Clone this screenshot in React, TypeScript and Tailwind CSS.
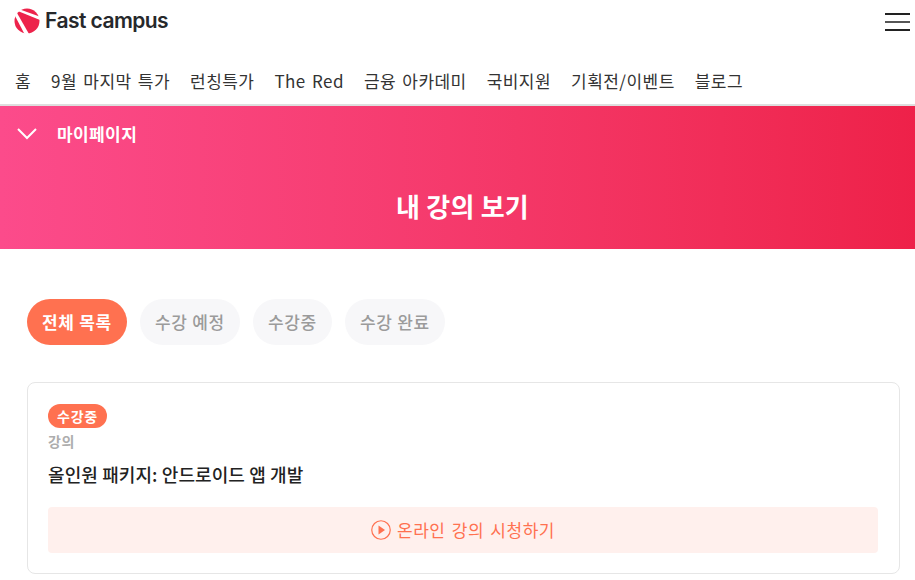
const kr = "font-['Noto_Sans_CJK_KR','Noto_Sans',sans-serif]";

const navItems = ["홈", "9월 마지막 특가", "런칭특가", "The Red", "금융 아카데미", "국비지원", "기획전/이벤트", "블로그"];
const tabs = ["수강 예정", "수강중", "수강 완료"];

const Logo = () => (
    <svg width="26" height="26" viewBox="0 0 26 26">
        <circle cx="13" cy="13" r="12.5" fill="#ed234b" />
        <path d="M2.5 2.5 L6 1.5 L25.5 8.5 L26 12 Z" fill="#fff" />
        <path d="M0 6 L3 5 L15 26 L10.5 26 Z" fill="#fff" />
    </svg>
);

const App = () => {
    return (
        <div className={`w-[915px] h-[580px] overflow-hidden bg-white ${kr}`}>
            <header className="h-[104px] flex flex-col">
                <div className="flex justify-between items-start pl-[14px] pr-[5px] pt-[8px] h-[62px]">
                    <div className="flex items-center gap-[5px]">
                        <Logo />
                        <span className="font-['Inter',sans-serif] text-[21px] leading-[26px] font-semibold tracking-[-0.55px] text-[#26282b]">Fast campus</span>
                    </div>
                    <button className="w-[25px] flex flex-col gap-[6px] mt-[5px]">
                        <span className="h-[2px] bg-[#222]"></span>
                        <span className="h-[2px] bg-[#555]"></span>
                        <span className="h-[2px] bg-[#222]"></span>
                    </button>
                </div>
                <nav className="flex gap-[20px] pl-[15px] text-[17px] leading-[38px] tracking-[0.45px] [word-spacing:2px] text-[#333]">
                    {navItems.map((item) => (
                        <span key={item}>{item}</span>
                    ))}
                </nav>
            </header>
            <div className="h-[2px] bg-[#dedede]"></div>
            <section className="h-[143px] bg-gradient-to-r from-[#fc4b8b] to-[#ee2149] text-white">
                <div className="flex items-center h-[56px] pl-[17px] gap-[20px]">
                    <svg width="20" height="12" viewBox="0 0 20 12" fill="none" stroke="#fff" strokeWidth="2">
                        <path d="M1 1 L10 10 L19 1" />
                    </svg>
                    <span className="text-[17px] font-bold tracking-[0.4px]">마이페이지</span>
                </div>
                <h1 className="text-center pl-[10px] text-[26px] leading-[36px] font-bold tracking-[0.2px] mt-[26px]">내 강의 보기</h1>
            </section>
            <main className="pl-[27px] pr-[15px] pt-[50px]">
                <div className="flex gap-[13px] tracking-[0.7px] [word-spacing:2px]">
                    <button className="h-[46px] w-[100px] rounded-full bg-[#ff7150] text-white text-[17px] font-bold">전체 목록</button>
                    {tabs.map((tab) => (
                        <button key={tab} className="h-[46px] px-[15px] rounded-full bg-[#f7f7f9] text-[#9b9b9b] text-[17px] font-medium">{tab}</button>
                    ))}
                </div>
                <div className="mt-[37px] h-[192px] border border-[#e6e6e6] rounded-[8px] pl-[20px] pr-[21px] pt-[21px]">
                    <span className="inline-block h-[24px] px-[9px] rounded-full bg-[#ff7150] text-white text-[14px] leading-[24px] font-bold tracking-[0.8px] align-top">수강중</span>
                    <p className="text-[14px] leading-[20px] mt-[3px] font-bold tracking-[0.5px] text-[#adadad]">강의</p>
                    <p className="text-[18px] leading-[26px] mt-[10px] font-medium tracking-[0.1px] text-[#222]">올인원 패키지: 안드로이드 앱 개발</p>
                    <button className="mt-[20px] w-full h-[46px] rounded-[4px] bg-[#fff0ed] text-[#ff7150] text-[17px] tracking-[0.5px] [word-spacing:2px] flex items-center justify-center gap-[6px]">
                        <svg width="20" height="20" viewBox="0 0 20 20">
                            <circle cx="10" cy="10" r="9.25" fill="none" stroke="#ff7150" strokeWidth="1.2" />
                            <path d="M7.5 5.5 L14 10 L7.5 14.5 Z" fill="#ff7150" />
                        </svg>
                        온라인 강의 시청하기
                    </button>
                </div>
            </main>
        </div>
    )
}

export default App;
